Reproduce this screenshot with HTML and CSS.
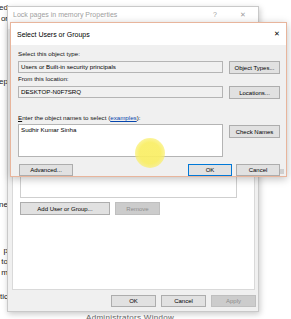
FILE: index.html
```html
<!DOCTYPE html>
<html lang="en">
<head>
    <meta charset="UTF-8">
    <meta name="viewport" content="width=device-width, initial-scale=1.0">
    <title>Select Users or Groups</title>
    <link rel="stylesheet" href="styles.css">
</head>
<body>
    <div class="desktop">
        <!-- text of the window lying underneath everything -->
        <div class="under under-top">
            <div>ed</div>
            <div>or</div>
        </div>
        <div class="under under-ep">ep</div>
        <div class="under under-ne">ne</div>
        <div class="under under-low">
            <div>p</div>
            <div>to</div>
            <div>m</div>
            <div class="under-gap">tic</div>
        </div>
        <div class="under-bottom">Administrators Window</div>

        <!-- Properties window (behind) -->
        <div class="props">
            <div class="props-title">
                <span class="props-caption">Lock pages in memory Properties</span>
                <span class="props-help">?</span>
                <span class="props-close">&#x2715;</span>
            </div>
            <div class="props-panel">
                <div class="user-list"></div>
                <div class="props-actions">
                    <button class="btn btn-add">Add User or Group...</button>
                    <button class="btn btn-remove" disabled>Remove</button>
                </div>
            </div>
            <div class="props-footer">
                <button class="btn btn-foot">OK</button>
                <button class="btn btn-foot">Cancel</button>
                <button class="btn btn-foot" disabled>Apply</button>
            </div>
        </div>

        <!-- Select Users or Groups dialog (front) -->
        <div class="dialog">
            <div class="dlg-title">
                <span>Select Users or Groups</span>
                <span class="dlg-close">&#x2715;</span>
            </div>
            <div class="dlg-body">
                <div class="label">Select this object type:</div>
                <div class="row">
                    <div class="field">Users or Built-in security principals</div>
                    <button class="btn btn-side">Object Types...</button>
                </div>

                <div class="label label-2">From this location:</div>
                <div class="row">
                    <div class="field">DESKTOP-N0F7SRQ</div>
                    <button class="btn btn-side">Locations...</button>
                </div>

                <div class="label label-3"><u>E</u>nter the object names to select (<a href="#">examples</a>):</div>
                <div class="row">
                    <div class="names">Sudhir Kumar Sinha</div>
                    <button class="btn btn-side btn-check">Check Names</button>
                </div>

                <div class="dlg-actions">
                    <button class="btn btn-adv">Advanced...</button>
                    <div class="dlg-right">
                        <button class="btn btn-dlg btn-default">OK</button>
                        <button class="btn btn-dlg">Cancel</button>
                    </div>
                </div>
            </div>
            <div class="grip"></div>
        </div>

        <!-- cursor highlight of the screen recorder -->
        <div class="cursor-spot"></div>
    </div>
</body>
</html>
```

FILE: styles.css
```css
body {
    margin: 0;
    background: #fff;
    font-family: "Liberation Sans", Arial, sans-serif;
    color: #000;
}

.desktop {
    position: relative;
    width: 291px;
    height: 319px;
    overflow: hidden;
    background: #fff;
}

/* stubs of the page behind */
.under {
    position: absolute;
    left: -40px;
    width: 48px;
    text-align: right;
    font-size: 8px;
    line-height: 11px;
    color: #222;
    white-space: nowrap;
}

.under-top { top: 2px; }
.under-ep { top: 76px; }
.under-ne { top: 199px; }
.under-low { top: 245px; }
.under-gap { margin-top: 13px; }

.under-bottom {
    position: absolute;
    left: 86px;
    top: 313px;
    font-size: 8px;
    color: #666;
    letter-spacing: 0.3px;
}

/* buttons */
.btn {
    box-sizing: border-box;
    font-family: inherit;
    font-size: 6px;
    color: #000;
    background: #e1e1e1;
    border: 1px solid #adadad;
    padding: 0;
    margin: 0;
    height: 12px;
    line-height: 10px;
}

.btn:disabled {
    background: #cccccc;
    border-color: #bfbfbf;
    color: #8d8d8d;
}

/* properties window */
.props {
    position: absolute;
    left: 7px;
    top: 6px;
    width: 252px;
    height: 306px;
    box-sizing: border-box;
    border: 1px solid #c9c9c9;
    background: #f0f0f0;
    box-shadow: 1px 2px 6px rgba(0, 0, 0, 0.22);
    display: flex;
    flex-direction: column;
}

.props-title {
    height: 22px;
    flex-shrink: 0;
    background: #fff;
    display: flex;
    align-items: center;
    padding: 0 0 7px 5px;
    box-sizing: border-box;
    font-size: 7px;
    color: #a0a0a0;
}

.props-caption { flex: 1; }

.props-help {
    width: 28px;
    text-align: center;
}

.props-close {
    width: 28px;
    text-align: center;
    margin-right: 1px;
}

.props-panel {
    flex: 1;
    margin: 0 3px 0 4px;
    background: #fff;
    border: 1px solid #d9d9d9;
    display: flex;
    flex-direction: column;
    justify-content: flex-end;
    padding: 0 17px 74px 7px;
}

.user-list {
    height: 80px;
    border: 1px solid #cfcfcf;
    background: #fff;
}

.props-actions {
    display: flex;
    gap: 5px;
    margin-top: 4px;
}

.btn-add {
    width: 90px;
    height: 13px;
}

.btn-remove {
    width: 45px;
    height: 13px;
}

.props-footer {
    height: 21px;
    flex-shrink: 0;
    display: flex;
    justify-content: flex-end;
    align-items: center;
    gap: 5px;
    padding-right: 2px;
}

.btn-foot {
    width: 45px;
    height: 12px;
}

/* select users dialog */
.dialog {
    position: absolute;
    left: 10px;
    top: 22px;
    width: 277px;
    height: 155px;
    box-sizing: border-box;
    border: 1px solid #e8b59c;
    background: #f0f0f0;
    box-shadow: 0 2px 8px rgba(0, 0, 0, 0.25);
}

.dlg-title {
    height: 22px;
    background: #fff;
    display: flex;
    align-items: center;
    justify-content: space-between;
    padding: 0 5px 0 6px;
    font-size: 7px;
}

.dlg-close {
    font-size: 7px;
    margin-right: 1px;
}

.dlg-body {
    padding: 5px 6px 0 7px;
}

.label {
    font-size: 6.2px;
    line-height: 8px;
    height: 8px;
    margin-bottom: 3px;
    color: #111;
}

.label a {
    color: #0645ad;
}

.label-2 { margin-top: 1px; }
.label-3 { margin-top: 15px; margin-bottom: 2px; }

.row {
    display: flex;
    gap: 6px;
    align-items: flex-start;
}

.field {
    box-sizing: border-box;
    width: 205px;
    height: 12px;
    border: 1px solid #b4b4b4;
    background: #f0f0f0;
    font-size: 6.2px;
    line-height: 10px;
    padding-left: 2px;
}

.btn-side {
    width: 51px;
    height: 13px;
}

.btn-check {
    margin-top: 1px;
}

.names {
    box-sizing: border-box;
    width: 205px;
    height: 33px;
    border: 1px solid #b4b4b4;
    background: #fff;
    font-size: 6.2px;
    line-height: 8px;
    padding: 1px 2px;
}

.dlg-actions {
    display: flex;
    justify-content: space-between;
    margin-top: 7px;
}

.btn-adv {
    width: 54px;
    margin-left: 1px;
}

.dlg-right {
    display: flex;
    gap: 4px;
}

.btn-dlg {
    width: 44px;
}

.btn-default {
    border-color: #0078d7;
}

.grip {
    position: absolute;
    right: 2px;
    bottom: 2px;
    width: 5px;
    height: 5px;
    background: radial-gradient(circle, #a9a9a9 0.6px, transparent 0.8px) 0 0 / 2px 2px;
}

.cursor-spot {
    position: absolute;
    left: 135px;
    top: 138px;
    width: 30px;
    height: 30px;
    border-radius: 50%;
    background: radial-gradient(circle, rgba(249, 238, 100, 0.92) 50%, rgba(249, 238, 100, 0.55) 78%, rgba(249, 238, 100, 0) 100%);
}
```
